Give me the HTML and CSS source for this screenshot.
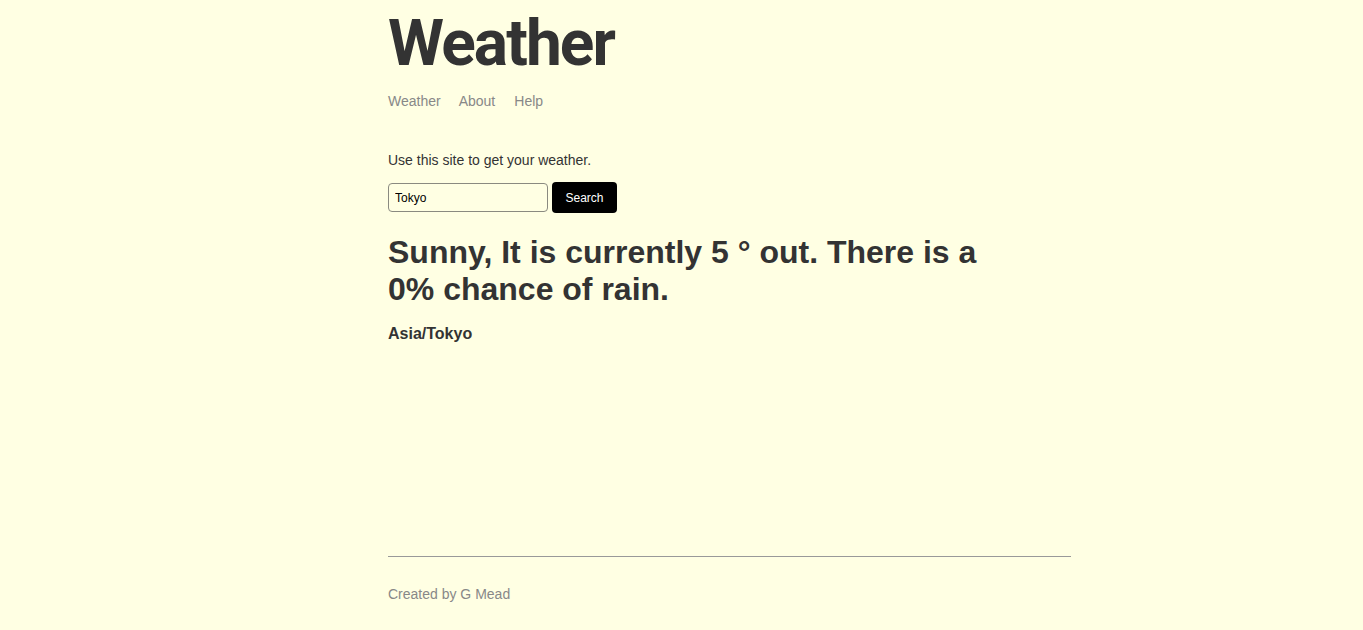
FILE: index.html
```html
<!DOCTYPE html>
<html lang="en">
<head>
<meta charset="utf-8">
<title>Weather</title>
<link rel="stylesheet" href="styles.css">
</head>
<body>
<div class="page">
  <div class="main">
    <header class="header">
      <h1 class="title">Weather</h1>
      <nav class="nav">
        <a href="#" class="nav-link">Weather</a>
        <a href="#" class="nav-link">About</a>
        <a href="#" class="nav-link">Help</a>
      </nav>
    </header>
    <p class="intro">Use this site to get your weather.</p>
    <form class="search">
      <input class="search-input" type="text" value="Tokyo">
      <button class="search-button" type="button">Search</button>
    </form>
    <h2 class="forecast">Sunny, It is currently 5 ° out. There is a 0% chance of rain.</h2>
    <p class="location">Asia/Tokyo</p>
  </div>
  <footer class="footer">
    <p class="credit">Created by G Mead</p>
  </footer>
</div>
</body>
</html>
```

FILE: styles.css
```css
html, body {
  margin: 0;
  padding: 0;
}

body {
  background: #ffffe3;
  color: #333333;
  font-family: "Liberation Sans", Arial, sans-serif;
}

.page {
  width: 683px;
  margin-left: 388px;
  min-height: 100vh;
  display: flex;
  flex-direction: column;
}

.main {
  flex-grow: 1;
}

.header {
  padding-top: 7px;
}

.title {
  margin: 0;
  font-family: Roboto, "Liberation Sans", Arial, sans-serif;
  font-size: 64px;
  line-height: 74px;
  font-weight: bold;
  letter-spacing: -1.9px;
  color: #333333;
}

.nav {
  margin-top: 12px;
  display: flex;
  gap: 18px;
}

.nav-link {
  font-size: 14px;
  color: #888888;
  text-decoration: none;
}

.nav-link + .nav-link + .nav-link {
  margin-left: 1px;
}

.intro {
  margin: 43px 0 14px;
  font-size: 14px;
}

.search {
  display: flex;
  align-items: center;
  gap: 4px;
}

.search-input {
  box-sizing: border-box;
  width: 160px;
  height: 29px;
  border: 1px solid #8a8a80;
  border-radius: 4px;
  background: #ffffe3;
  padding: 0 6px;
  font-family: "Liberation Sans", Arial, sans-serif;
  font-size: 12px;
  color: #000;
}

.search-button {
  box-sizing: border-box;
  width: 65px;
  height: 31px;
  border: none;
  border-radius: 4px;
  background: #000;
  color: #fff;
  font-family: "Liberation Sans", Arial, sans-serif;
  font-size: 12px;
}

.forecast {
  max-width: 600px;
  margin: 21px 0 0;
  font-size: 32px;
  font-weight: bold;
  line-height: 37px;
}

.location {
  margin: 17px 0 0;
  font-size: 16px;
  font-weight: bold;
}

.footer {
  border-top: 1px solid #999999;
  margin-top: 16px;
}

.credit {
  margin: 29px 0 28px;
  font-size: 14px;
  color: #888888;
}
```
